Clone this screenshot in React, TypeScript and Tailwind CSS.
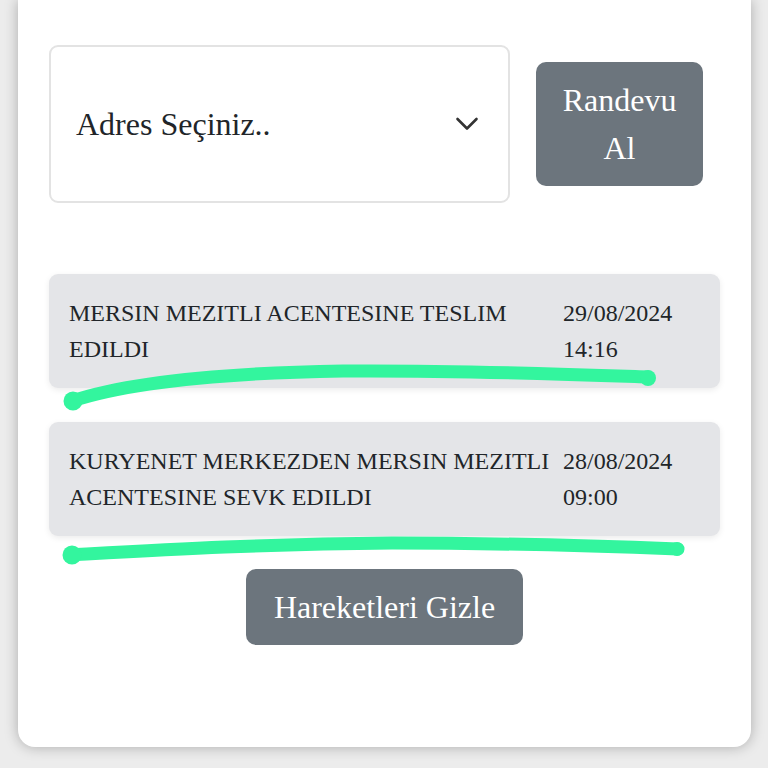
interface Movement {
  text: string;
  date: string;
  time: string;
}

const movements: Movement[] = [
  { text: 'MERSIN MEZITLI ACENTESINE TESLIM EDILDI', date: '29/08/2024', time: '14:16' },
  { text: 'KURYENET MERKEZDEN MERSIN MEZITLI ACENTESINE SEVK EDILDI', date: '28/08/2024', time: '09:00' },
];

function MovementCard({ item }: { item: Movement }) {
  return (
    <div className="flex rounded-[9px] bg-[#e4e5e8] px-5 py-[21px] text-[24px] leading-[36px] text-[#212529] shadow-[0_2px_6px_rgba(0,0,0,0.08)]">
      <div className="w-[494px] shrink-0">{item.text}</div>
      <div className="flex-1">
        {item.date}
        <br />
        {item.time}
      </div>
    </div>
  );
}

export default function App() {
  return (
    <div
      className="relative h-[768px] w-[768px] overflow-hidden bg-[#ececec]"
      style={{ fontFamily: '"Liberation Serif", "Times New Roman", serif' }}
    >
      <div className="ml-[18px] h-[747px] w-[733px] rounded-b-[17px] bg-white px-[31px] pt-[45px] shadow-[0_0_14px_rgba(0,0,0,0.28)]">
        <div className="flex items-center gap-[26px]">
          <div className="flex h-[158px] w-[461px] items-center justify-between rounded-[9px] border-2 border-[#e3e3e3] pl-[25px] pr-[29px] text-[32px] text-[#212529]">
            <span>Adres Seçiniz..</span>
            <svg width="24" height="16" viewBox="0 0 24 16" fill="none">
              <path d="M2.5 3 L12 12.5 L21.5 3" stroke="#333" strokeWidth="2.6" strokeLinecap="round" strokeLinejoin="round" />
            </svg>
          </div>
          <button className="w-[167px] rounded-[10px] bg-[#6c757d] py-[14px] text-[32px] leading-[48px] text-white">
            Randevu
            <br />
            Al
          </button>
        </div>

        <div className="mt-[71px] flex flex-col gap-[34px]">
          {movements.map((m) => (
            <MovementCard key={m.date} item={m} />
          ))}
        </div>

        <div className="mt-[33px] flex justify-center">
          <button className="rounded-[10px] bg-[#6c757d] px-[28px] py-[14px] text-[32px] leading-[48px] text-white">
            Hareketleri Gizle
          </button>
        </div>
      </div>

      {/* annotation strokes */}
      <svg className="pointer-events-none absolute inset-0" width="768" height="768" viewBox="0 0 768 768">
        <path
          d="M72 401 C 130 382, 220 373, 343 371 C 450 370, 560 374, 648 377"
          fill="none"
          stroke="#33f59e"
          strokeWidth="13"
          strokeLinecap="round"
        />
        <circle cx="73" cy="401" r="9.5" fill="#33f59e" />
        <circle cx="648" cy="378" r="8" fill="#33f59e" />
        <path
          d="M70 555 C 160 550, 260 544, 392 543 C 500 543, 600 546, 678 549"
          fill="none"
          stroke="#33f59e"
          strokeWidth="13"
          strokeLinecap="round"
        />
        <circle cx="72" cy="555" r="9.5" fill="#33f59e" />
        <circle cx="677" cy="549" r="7" fill="#33f59e" />
      </svg>
    </div>
  );
}
